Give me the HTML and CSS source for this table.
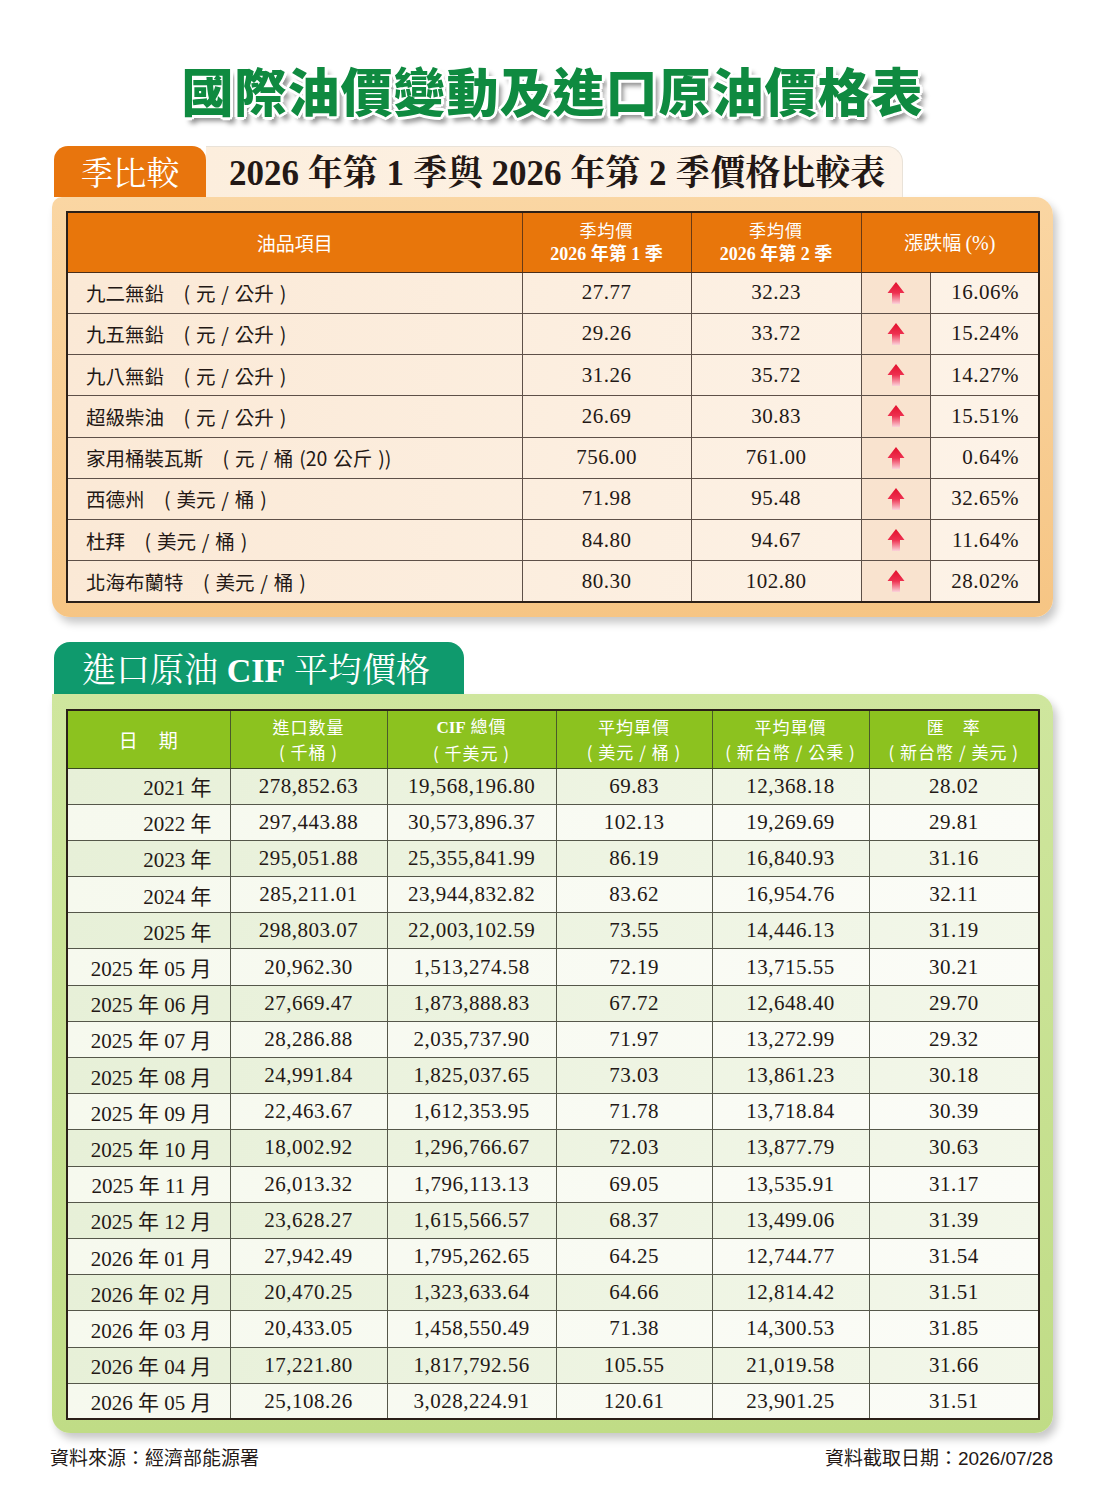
FILE: index.html
```html
<!DOCTYPE html>
<html lang="zh-Hant">
<head>
<meta charset="utf-8">
<title>國際油價變動及進口原油價格表</title>
<link rel="stylesheet" href="styles.css">
</head>
<body>
<div class="page">
  <h1 class="main-title">國際油價變動及進口原油價格表</h1>

  <section class="sec sec-q">
    <div class="sec-head">
      <div class="tab tab-orange">季比較</div>
      <div class="banner">2026 年第 1 季與 2026 年第 2 季價格比較表</div>
    </div>
    <div class="card card-orange">
      <table class="tbl tbl-q">
        <colgroup>
          <col class="c-item"><col class="c-p1"><col class="c-p2"><col class="c-arrow"><col class="c-pct">
        </colgroup>
        <thead>
          <tr>
            <th>油品項目</th>
            <th><span class="l1">季均價</span><span class="l2">2026 年第 1 季</span></th>
            <th><span class="l1">季均價</span><span class="l2">2026 年第 2 季</span></th>
            <th colspan="2">漲跌幅 <span class="pctmark">(%)</span></th>
          </tr>
        </thead>
        <tbody>
          <tr><td class="item">九二無鉛　( 元 / 公升 )</td><td>27.77</td><td>32.23</td><td class="arrow"><svg viewBox="0 0 18 24" width="18" height="24"><defs><linearGradient id="a1" x1="0" y1="0" x2="0" y2="1"><stop offset="0" stop-color="#e2102c"/><stop offset=".5" stop-color="#ee3050"/><stop offset="1" stop-color="#fbd3da"/></linearGradient></defs><path d="M9 1 L17.5 12 L13 12 L13 23 L5 23 L5 12 L0.5 12 Z" fill="url(#a1)"/></svg></td><td class="pct">16.06%</td></tr>
          <tr><td class="item">九五無鉛　( 元 / 公升 )</td><td>29.26</td><td>33.72</td><td class="arrow"><svg viewBox="0 0 18 24" width="18" height="24"><defs><linearGradient id="a2" x1="0" y1="0" x2="0" y2="1"><stop offset="0" stop-color="#e2102c"/><stop offset=".5" stop-color="#ee3050"/><stop offset="1" stop-color="#fbd3da"/></linearGradient></defs><path d="M9 1 L17.5 12 L13 12 L13 23 L5 23 L5 12 L0.5 12 Z" fill="url(#a2)"/></svg></td><td class="pct">15.24%</td></tr>
          <tr><td class="item">九八無鉛　( 元 / 公升 )</td><td>31.26</td><td>35.72</td><td class="arrow"><svg viewBox="0 0 18 24" width="18" height="24"><defs><linearGradient id="a3" x1="0" y1="0" x2="0" y2="1"><stop offset="0" stop-color="#e2102c"/><stop offset=".5" stop-color="#ee3050"/><stop offset="1" stop-color="#fbd3da"/></linearGradient></defs><path d="M9 1 L17.5 12 L13 12 L13 23 L5 23 L5 12 L0.5 12 Z" fill="url(#a3)"/></svg></td><td class="pct">14.27%</td></tr>
          <tr><td class="item">超級柴油　( 元 / 公升 )</td><td>26.69</td><td>30.83</td><td class="arrow"><svg viewBox="0 0 18 24" width="18" height="24"><defs><linearGradient id="a4" x1="0" y1="0" x2="0" y2="1"><stop offset="0" stop-color="#e2102c"/><stop offset=".5" stop-color="#ee3050"/><stop offset="1" stop-color="#fbd3da"/></linearGradient></defs><path d="M9 1 L17.5 12 L13 12 L13 23 L5 23 L5 12 L0.5 12 Z" fill="url(#a4)"/></svg></td><td class="pct">15.51%</td></tr>
          <tr><td class="item">家用桶裝瓦斯　( 元 / 桶 (20 公斤 ))</td><td>756.00</td><td>761.00</td><td class="arrow"><svg viewBox="0 0 18 24" width="18" height="24"><defs><linearGradient id="a5" x1="0" y1="0" x2="0" y2="1"><stop offset="0" stop-color="#e2102c"/><stop offset=".5" stop-color="#ee3050"/><stop offset="1" stop-color="#fbd3da"/></linearGradient></defs><path d="M9 1 L17.5 12 L13 12 L13 23 L5 23 L5 12 L0.5 12 Z" fill="url(#a5)"/></svg></td><td class="pct">0.64%</td></tr>
          <tr><td class="item">西德州　( 美元 / 桶 )</td><td>71.98</td><td>95.48</td><td class="arrow"><svg viewBox="0 0 18 24" width="18" height="24"><defs><linearGradient id="a6" x1="0" y1="0" x2="0" y2="1"><stop offset="0" stop-color="#e2102c"/><stop offset=".5" stop-color="#ee3050"/><stop offset="1" stop-color="#fbd3da"/></linearGradient></defs><path d="M9 1 L17.5 12 L13 12 L13 23 L5 23 L5 12 L0.5 12 Z" fill="url(#a6)"/></svg></td><td class="pct">32.65%</td></tr>
          <tr><td class="item">杜拜　( 美元 / 桶 )</td><td>84.80</td><td>94.67</td><td class="arrow"><svg viewBox="0 0 18 24" width="18" height="24"><defs><linearGradient id="a7" x1="0" y1="0" x2="0" y2="1"><stop offset="0" stop-color="#e2102c"/><stop offset=".5" stop-color="#ee3050"/><stop offset="1" stop-color="#fbd3da"/></linearGradient></defs><path d="M9 1 L17.5 12 L13 12 L13 23 L5 23 L5 12 L0.5 12 Z" fill="url(#a7)"/></svg></td><td class="pct">11.64%</td></tr>
          <tr><td class="item">北海布蘭特　( 美元 / 桶 )</td><td>80.30</td><td>102.80</td><td class="arrow"><svg viewBox="0 0 18 24" width="18" height="24"><defs><linearGradient id="a8" x1="0" y1="0" x2="0" y2="1"><stop offset="0" stop-color="#e2102c"/><stop offset=".5" stop-color="#ee3050"/><stop offset="1" stop-color="#fbd3da"/></linearGradient></defs><path d="M9 1 L17.5 12 L13 12 L13 23 L5 23 L5 12 L0.5 12 Z" fill="url(#a8)"/></svg></td><td class="pct">28.02%</td></tr>
        </tbody>
      </table>
    </div>
  </section>

  <section class="sec sec-cif">
    <div class="tab tab-green"><span>進口原油 <b class="lat">CIF</b> 平均價格</span></div>
    <div class="card card-green">
      <table class="tbl tbl-cif">
        <colgroup>
          <col class="g1"><col class="g2"><col class="g3"><col class="g4"><col class="g5"><col class="g6">
        </colgroup>
        <thead>
          <tr>
            <th>日　期</th>
            <th><span class="l1">進口數量</span><span class="l1">( 千桶 )</span></th>
            <th><span class="l1"><b class="lat">CIF</b> 總價</span><span class="l1">( 千美元 )</span></th>
            <th><span class="l1">平均單價</span><span class="l1">( 美元 / 桶 )</span></th>
            <th><span class="l1">平均單價</span><span class="l1">( 新台幣 / 公秉 )</span></th>
            <th><span class="l1">匯　率</span><span class="l1">( 新台幣 / 美元 )</span></th>
          </tr>
        </thead>
        <tbody>
          <tr><td class="date">2021 年</td><td>278,852.63</td><td>19,568,196.80</td><td>69.83</td><td>12,368.18</td><td>28.02</td></tr>
          <tr><td class="date">2022 年</td><td>297,443.88</td><td>30,573,896.37</td><td>102.13</td><td>19,269.69</td><td>29.81</td></tr>
          <tr><td class="date">2023 年</td><td>295,051.88</td><td>25,355,841.99</td><td>86.19</td><td>16,840.93</td><td>31.16</td></tr>
          <tr><td class="date">2024 年</td><td>285,211.01</td><td>23,944,832.82</td><td>83.62</td><td>16,954.76</td><td>32.11</td></tr>
          <tr><td class="date">2025 年</td><td>298,803.07</td><td>22,003,102.59</td><td>73.55</td><td>14,446.13</td><td>31.19</td></tr>
          <tr><td class="date">2025 年 05 月</td><td>20,962.30</td><td>1,513,274.58</td><td>72.19</td><td>13,715.55</td><td>30.21</td></tr>
          <tr><td class="date">2025 年 06 月</td><td>27,669.47</td><td>1,873,888.83</td><td>67.72</td><td>12,648.40</td><td>29.70</td></tr>
          <tr><td class="date">2025 年 07 月</td><td>28,286.88</td><td>2,035,737.90</td><td>71.97</td><td>13,272.99</td><td>29.32</td></tr>
          <tr><td class="date">2025 年 08 月</td><td>24,991.84</td><td>1,825,037.65</td><td>73.03</td><td>13,861.23</td><td>30.18</td></tr>
          <tr><td class="date">2025 年 09 月</td><td>22,463.67</td><td>1,612,353.95</td><td>71.78</td><td>13,718.84</td><td>30.39</td></tr>
          <tr><td class="date">2025 年 10 月</td><td>18,002.92</td><td>1,296,766.67</td><td>72.03</td><td>13,877.79</td><td>30.63</td></tr>
          <tr><td class="date">2025 年 11 月</td><td>26,013.32</td><td>1,796,113.13</td><td>69.05</td><td>13,535.91</td><td>31.17</td></tr>
          <tr><td class="date">2025 年 12 月</td><td>23,628.27</td><td>1,615,566.57</td><td>68.37</td><td>13,499.06</td><td>31.39</td></tr>
          <tr><td class="date">2026 年 01 月</td><td>27,942.49</td><td>1,795,262.65</td><td>64.25</td><td>12,744.77</td><td>31.54</td></tr>
          <tr><td class="date">2026 年 02 月</td><td>20,470.25</td><td>1,323,633.64</td><td>64.66</td><td>12,814.42</td><td>31.51</td></tr>
          <tr><td class="date">2026 年 03 月</td><td>20,433.05</td><td>1,458,550.49</td><td>71.38</td><td>14,300.53</td><td>31.85</td></tr>
          <tr><td class="date">2026 年 04 月</td><td>17,221.80</td><td>1,817,792.56</td><td>105.55</td><td>21,019.58</td><td>31.66</td></tr>
          <tr><td class="date">2026 年 05 月</td><td>25,108.26</td><td>3,028,224.91</td><td>120.61</td><td>23,901.25</td><td>31.51</td></tr>
        </tbody>
      </table>
    </div>
  </section>

  <footer class="foot">
    <span>資料來源：經濟部能源署</span>
    <span>資料截取日期：2026/07/28</span>
  </footer>
</div>
</body>
</html>
```

FILE: styles.css
```css
* { box-sizing: border-box; }

body {
  margin: 0;
  background: #ffffff;
  color: #231815;
  font-family: "Liberation Serif", "Noto Serif CJK TC", "Noto Sans CJK TC", serif;
}

.page {
  width: 1100px;
  padding: 60px 47px 0 52px;
}

.main-title {
  margin: 0;
  height: 60px;
  line-height: 60px;
  text-align: center;
  font-family: "Noto Sans CJK TC", sans-serif;
  font-weight: 900;
  font-size: 52px;
  letter-spacing: 1px;
  color: #0f8a40;
  text-shadow:
    -2px -2px 0 #fff, 2px -2px 0 #fff, -2px 2px 0 #fff, 2px 2px 0 #fff,
    0 -3px 0 #fff, 0 3px 0 #fff, -3px 0 0 #fff, 3px 0 0 #fff,
    5px 6px 5px rgba(0, 0, 0, 0.45);
}

.sec-q { margin-top: 26px; }
.sec-cif { margin-top: 25px; }

.sec-head {
  display: flex;
  height: 51px;
  padding-left: 2px;
}

.tab {
  color: #ffffff;
  display: flex;
  align-items: center;
}

.tab-orange {
  width: 152px;
  height: 51px;
  background: #e8750d;
  border-radius: 14px 14px 0 0;
  justify-content: center;
  font-family: "Noto Serif CJK TC", "Noto Sans CJK TC", serif;
  font-size: 33px;
  padding-bottom: 2px;
}

.banner {
  width: 697px;
  height: 51px;
  background: linear-gradient(to right, #fceedd, #fdf3e8);
  border: 1px solid #e9e2d8;
  border-bottom: none;
  border-left: none;
  border-radius: 0 16px 0 0;
  padding-left: 23px;
  padding-bottom: 4px;
  display: flex;
  align-items: center;
  font-family: "Liberation Serif", "Noto Serif CJK TC", "Noto Sans CJK TC", serif;
  font-weight: 700;
  font-size: 35px;
  color: #231815;
}

.card {
  width: 1001px;
  border-radius: 0 18px 18px 18px;
  box-shadow: 4px 6px 8px rgba(0, 0, 0, 0.22);
}

.card-orange {
  background: linear-gradient(to bottom, #fad6a3, #f6c584);
  padding: 14px 15px 14px 14px;
  border-radius: 10px 18px 18px 18px;
}

.card-green {
  background: linear-gradient(to bottom, #cfe69e, #c0dc86);
  padding: 15px 15px 13px 14px;
}

.tbl {
  width: 972px;
  border-collapse: collapse;
  table-layout: fixed;
  border: 2px solid #2a1f18;
}

.tbl th {
  color: #ffffff;
  font-family: "Noto Sans CJK TC", sans-serif;
  font-weight: 400;
  font-size: 17px;
  letter-spacing: 1px;
  line-height: 25px;
  text-align: center;
  padding: 0;
}

.tbl th .l1, .tbl th .l2 { display: block; }
.tbl th .l2 {
  font-family: "Liberation Serif", "Noto Sans CJK TC", serif;
  font-weight: 700;
  letter-spacing: 0;
}
.lat {
  font-family: "Liberation Serif", serif;
  font-weight: 700;
  letter-spacing: 0;
}
.pctmark {
  font-family: "Liberation Serif", serif;
  font-size: 20px;
}

.tbl td {
  font-family: "Liberation Serif", "Noto Sans CJK TC", serif;
  font-size: 21px;
  letter-spacing: 0.5px;
  text-align: center;
  padding: 0;
  color: #231815;
}

/* quarterly table */
.c-item { width: 455px; }
.c-p1 { width: 169px; }
.c-p2 { width: 170px; }
.c-arrow { width: 69px; }
.c-pct { width: 109px; }

.tbl-q thead tr { height: 60px; background: #e8760b; }
.tbl-q th { border-right: 1px solid #6a3a14; border-bottom: 1px solid #4a2e1a; font-size: 19px; letter-spacing: 0; }
.tbl-q th .l1 { font-size: 17px; letter-spacing: 1px; }
.tbl-q th .l2 { font-size: 18px; }
.tbl-q tbody tr {
  height: 41.25px;
  background: linear-gradient(to right, #fbe9d6, #fdf3e8);
}
.tbl-q td { border: 1px solid #5e5048; }
.tbl-q td.item {
  text-align: left;
  padding-left: 18px;
  font-family: "Noto Sans CJK TC", sans-serif;
  font-size: 19.5px;
  letter-spacing: 0;
  word-spacing: 1.5px;
}
.tbl-q td.arrow {
  background: #f9e3cf;
  line-height: 0;
}
.tbl-q td.arrow svg { vertical-align: middle; }
.tbl-q td.pct {
  text-align: right;
  padding-right: 19px;
}

/* CIF table */
.tab-green {
  width: 410px;
  height: 52px;
  margin-left: 2px;
  background: #0f9a6d;
  border-radius: 16px 16px 0 0;
  padding-left: 28px;
  font-family: "Noto Serif CJK TC", "Noto Sans CJK TC", serif;
  font-size: 34px;
  padding-bottom: 2px;
}

.g1 { width: 163px; }
.g2 { width: 157px; }
.g3 { width: 169px; }
.g4 { width: 156px; }
.g5 { width: 157px; }
.g6 { width: 170px; }

.tbl-cif thead tr { height: 58px; background: #8cc21f; }
.tbl-cif th { border-right: 1px solid #4a5a2a; border-bottom: 1px solid #3a4a22; }
.tbl-cif th:first-child { font-size: 19px; }
.tbl-cif tbody tr { height: 36.2px; }
.tbl-cif tbody tr:nth-child(odd) { background: linear-gradient(to right, #e7f0d8, #f3f7ea); }
.tbl-cif tbody tr:nth-child(even) { background: linear-gradient(to right, #f6f9ee, #fbfcf7); }
.tbl-cif td { border: 1px solid #55574a; }
.tbl-cif td.date {
  text-align: right;
  padding-right: 18px;
  letter-spacing: 0;
}

.foot {
  display: flex;
  justify-content: space-between;
  margin-top: 14px;
  font-family: "Liberation Sans", "Noto Sans CJK TC", sans-serif;
  font-size: 19px;
  line-height: 24px;
  color: #231815;
}
.foot span:first-child { margin-left: -2px; }
```
